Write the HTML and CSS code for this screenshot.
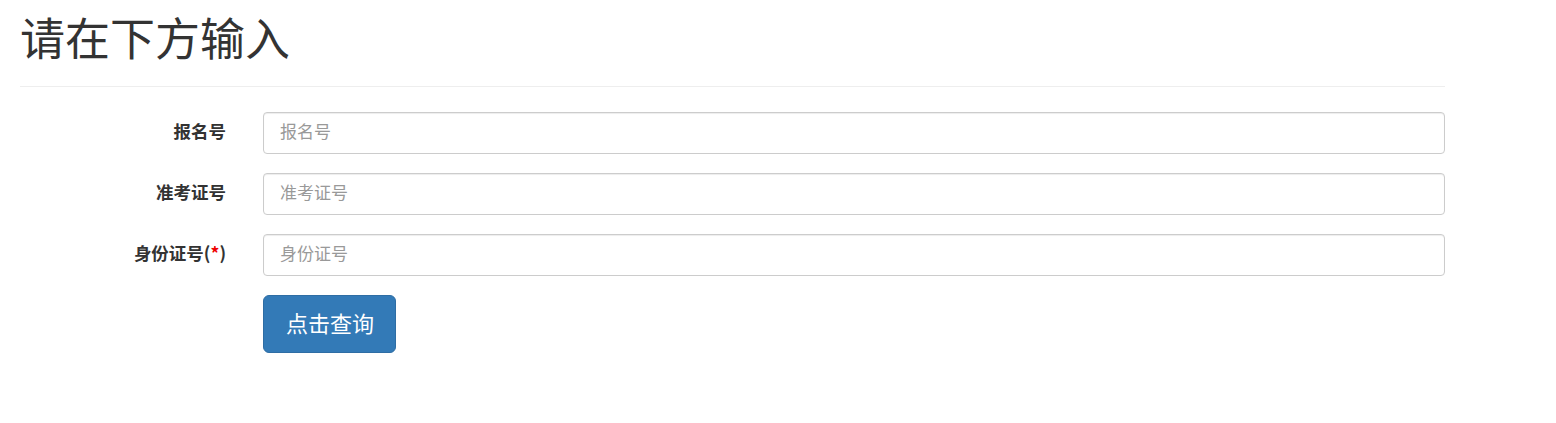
FILE: index.html
```html
<!DOCTYPE html>
<html>
<head>
  <meta charset="utf-8">
  <title>查询</title>
  <link rel="stylesheet" href="styles.css">
</head>
<body>
  <div class="container">
    <h1 class="page-title">请在下方输入</h1>
    <form class="query-form">
      <div class="form-row">
        <label class="form-label" for="bmh">报名号</label>
        <input class="form-input" id="bmh" type="text" placeholder="报名号">
      </div>
      <div class="form-row">
        <label class="form-label" for="zkzh">准考证号</label>
        <input class="form-input" id="zkzh" type="text" placeholder="准考证号">
      </div>
      <div class="form-row">
        <label class="form-label" for="sfzh">身份证号(<span class="required">*</span>)</label>
        <input class="form-input" id="sfzh" type="text" placeholder="身份证号">
      </div>
      <div class="form-row">
        <span></span>
        <div><button class="btn-query" type="button">点击查询</button></div>
      </div>
    </form>
  </div>
</body>
</html>
```

FILE: styles.css
```css
body {
  margin: 0;
  background-color: #fff;
  color: #333;
  font-family: "Noto Sans CJK SC", "Liberation Sans", sans-serif;
}

.container {
  width: 1425px;
  margin-left: 20px;
}

.page-title {
  font-size: 45px;
  font-weight: normal;
  line-height: 50px;
  margin: 0;
  padding: 12px 0 24px;
  border-bottom: 1px solid #eee;
  color: #333;
}

.query-form {
  padding-top: 25px;
}

.form-row {
  display: grid;
  grid-template-columns: 206px 1fr;
  column-gap: 37px;
  align-items: center;
  margin-bottom: 19px;
}

.form-label {
  text-align: right;
  font-size: 17.5px;
  font-weight: bold;
  color: #333;
  padding-bottom: 5px;
}

.required {
  color: #e00;
}

.form-input {
  box-sizing: border-box;
  height: 42px;
  width: 100%;
  padding: 0 16px 5px;
  font-family: inherit;
  font-size: 17px;
  color: #555;
  border: 1px solid #ccc;
  border-radius: 4px;
  box-shadow: inset 0 1px 1px rgba(0, 0, 0, 0.075);
}

.form-input::placeholder {
  color: #999;
}

.btn-query {
  box-sizing: border-box;
  height: 58px;
  padding: 0 21px 5px 22px;
  font-family: inherit;
  font-size: 22px;
  color: #fff;
  background-color: #337ab7;
  border: 1px solid #2e6da4;
  border-radius: 6px;
  cursor: pointer;
}
```
